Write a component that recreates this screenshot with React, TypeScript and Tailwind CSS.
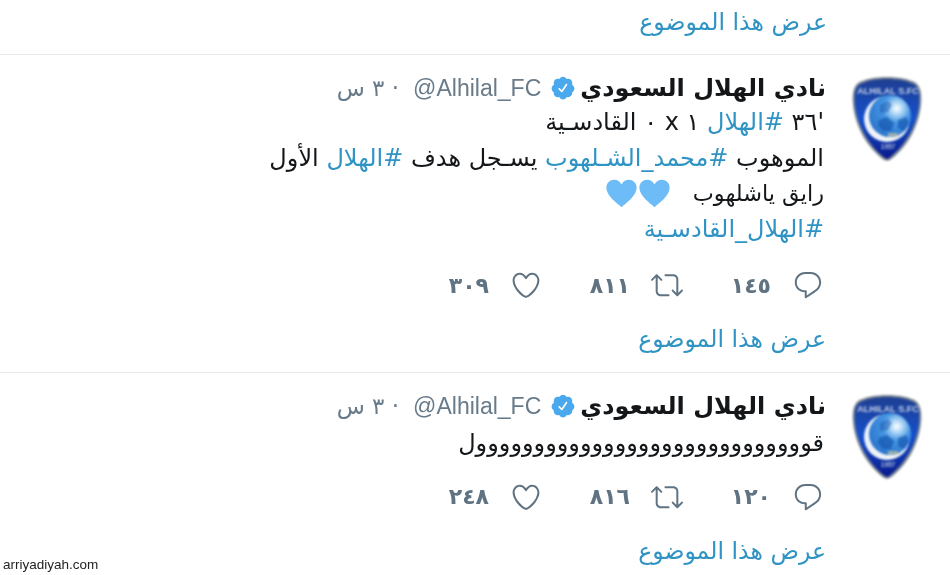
import React from 'react'

const replyPath =
    'M14.046 2.242l-4.148-.01h-.002c-4.374 0-7.8 3.427-7.8 7.802 0 4.098 3.186 7.206 7.465 7.37v3.828c0 .108.044.286.12.403.142.225.384.347.632.347.138 0 .277-.038.402-.118.264-.168 6.473-4.14 8.088-5.506 1.902-1.61 3.04-3.97 3.043-6.312v-.017c-.006-4.367-3.43-7.787-7.8-7.788zm3.787 12.972c-1.134.96-4.862 3.405-6.772 4.643V16.67c0-.414-.335-.75-.75-.75h-.396c-3.66 0-6.318-2.476-6.318-5.886 0-3.534 2.768-6.302 6.3-6.302l4.147.01h.002c3.532 0 6.3 2.766 6.302 6.296-.003 1.91-.942 3.844-2.514 5.176z'
const retweetPath =
    'M23.77 15.67c-.292-.293-.767-.293-1.06 0l-2.22 2.22V7.65c0-2.068-1.683-3.75-3.75-3.75h-5.85c-.414 0-.75.336-.75.75s.336.75.75.75h5.85c1.24 0 2.25 1.01 2.25 2.25v10.24l-2.22-2.22c-.293-.293-.768-.293-1.06 0s-.294.768 0 1.06l3.5 3.5c.145.147.337.22.53.22s.383-.072.53-.22l3.5-3.5c.294-.292.294-.767 0-1.06zm-10.66 3.28H7.26c-1.24 0-2.25-1.01-2.25-2.25V6.46l2.22 2.22c.148.147.34.22.532.22s.384-.073.53-.22c.293-.293.293-.768 0-1.06l-3.5-3.5c-.293-.294-.768-.294-1.06 0l-3.5 3.5c-.294.292-.294.767 0 1.06s.767.293 1.06 0l2.22-2.22V16.7c0 2.068 1.683 3.75 3.75 3.75h5.85c.414 0 .75-.336.75-.75s-.337-.75-.75-.75z'
const heartPath =
    'M12 21.638h-.014C9.403 21.59 1.95 14.856 1.95 8.478c0-3.064 2.525-5.754 5.403-5.754 2.29 0 3.83 1.58 4.646 2.73.814-1.148 2.354-2.73 4.645-2.73 2.88 0 5.404 2.69 5.404 5.755 0 6.376-7.454 13.11-10.037 13.157H12zM7.354 4.225c-2.08 0-3.903 1.988-3.903 4.255 0 5.74 7.034 11.596 8.55 11.658 1.518-.062 8.55-5.917 8.55-11.658 0-2.267-1.823-4.255-3.903-4.255-2.528 0-3.94 2.936-3.952 2.965-.23.562-1.156.562-1.387 0-.014-.03-1.425-2.965-3.954-2.965z'
const badgePath =
    'M22.5 12.5c0-1.58-.875-2.95-2.148-3.6.154-.435.238-.905.238-1.4 0-2.21-1.71-3.998-3.818-3.998-.47 0-.92.084-1.336.25C14.818 2.415 13.51 1.5 12 1.5s-2.816.917-3.437 2.25c-.415-.165-.866-.25-1.336-.25-2.11 0-3.818 1.79-3.818 4 0 .494.083.964.237 1.4-1.272.65-2.147 2.018-2.147 3.6 0 1.495.782 2.798 1.942 3.486-.02.17-.032.34-.032.514 0 2.21 1.708 4 3.818 4 .47 0 .92-.086 1.335-.25.62 1.334 1.926 2.25 3.437 2.25 1.512 0 2.818-.916 3.437-2.25.415.163.865.248 1.336.248 2.11 0 3.818-1.79 3.818-4 0-.174-.012-.344-.033-.513 1.158-.687 1.943-1.99 1.943-3.484zm-6.616-3.334l-4.334 6.5c-.145.217-.382.334-.625.334-.143 0-.288-.04-.416-.126l-.115-.094-2.415-2.415c-.293-.293-.293-.768 0-1.06s.768-.294 1.06 0l1.77 1.767 3.825-5.74c.23-.345.696-.436 1.04-.207.346.23.44.696.21 1.04z'

function Icon({ d, className }: { d: string; className?: string }) {
    return (
        <svg viewBox="0 0 24 24" className={className} fill="currentColor">
            <path d={d} />
        </svg>
    )
}

function Crest({ id }: { id: string }) {
    return (
        <svg viewBox="0 0 70 84" className="w-[70px] h-[84px] shrink-0 blur-[0.8px]">
            <defs>
                <linearGradient id={id + 's'} x1="0" y1="0" x2="0" y2="1">
                    <stop offset="0" stopColor="#1f3f92" />
                    <stop offset="0.5" stopColor="#1450cc" />
                    <stop offset="1" stopColor="#0a1a8c" />
                </linearGradient>
                <radialGradient id={id + 'b'} cx="0.66" cy="0.32" r="0.75">
                    <stop offset="0" stopColor="#ffffff" />
                    <stop offset="0.18" stopColor="#b4daf6" />
                    <stop offset="0.45" stopColor="#4494e2" />
                    <stop offset="1" stopColor="#2a74cc" />
                </radialGradient>
            </defs>
            <path
                d="M35 0 C46 0 58 2 64 6 C69 10 70 18 69 28 C67 48 56 70 38 83 C36 84 34 84 32 83 C14 70 3 48 1 28 C0 18 1 10 6 6 C12 2 24 0 35 0 Z"
                fill="#7d8794"
            />
            <path
                d="M35 2 C46 2 57 4 63 8 C67 11 68 18 67 28 C65 47 54 68 37 81 C36 82 34 82 33 81 C16 68 5 47 3 28 C2 18 3 11 7 8 C13 4 24 2 35 2 Z"
                fill={`url(#${id}s)`}
            />
            <text
                x="36"
                y="17"
                textAnchor="middle"
                fontSize="9"
                fontWeight="700"
                fill="#c4cee4"
                fontFamily="'Liberation Sans', sans-serif"
                direction="ltr"
            >
                ALHILAL S.FC
            </text>
            <circle cx="35" cy="42" r="23" fill="#eef3f8" />
            <circle cx="38" cy="39" r="21" fill={`url(#${id}b)`} />
            <path d="M27 43 l8 -3 l7 6 l-3 8 l-8 0 l-5 -6 Z" fill="#0f4fa8" opacity="0.6" />
            <path d="M46 43 l8 -3 l3 6 l-5 8 l-6 -3 Z" fill="#0f4fa8" opacity="0.6" />
            <path d="M28 28 l8 -4 l4 4 l-4 7 l-8 1 Z" fill="#0f4fa8" opacity="0.45" />
            <path d="M36 56 l9 0 l3 3 l-12 1 Z" fill="#a8b6a8" opacity="0.9" />
            <text
                x="36"
                y="72"
                textAnchor="middle"
                fontSize="6.5"
                fontWeight="700"
                fill="#aebcd8"
                fontFamily="'Liberation Sans', sans-serif"
                direction="ltr"
            >
                1957
            </text>
        </svg>
    )
}

function Heart() {
    return (
        <svg viewBox="0 0 24 24" className="w-[33px] h-[33px]" fill="#6dbcf7">
            <path d="M12 22 C9 19 1 14 1 7.8 C1 4.3 3.7 2 6.6 2 C9 2 11 3.4 12 5.4 C13 3.4 15 2 17.4 2 C20.3 2 23 4.3 23 7.8 C23 14 15 19 12 22 Z" />
        </svg>
    )
}

function Tag({ children }: { children: React.ReactNode }) {
    return <span className="text-[#2f93c4]">{children}</span>
}

function ThreadLink() {
    return <div className="h-8 leading-8 pr-[123px] text-[23.6px] text-[#2f93c4]">عرض هذا الموضوع</div>
}

function Action({ d, count }: { d: string; count: string }) {
    return (
        <div className="w-[141px] flex items-center pr-[2px] text-[#5f7382]">
            <Icon d={d} className="w-8 h-8" />
            <span className="font-bold text-[22px] mr-[21px]">{count}</span>
        </div>
    )
}

function Tweet({
    id,
    counts,
    children,
    actionsClass,
}: {
    id: string
    counts: string[]
    children: React.ReactNode
    actionsClass: string
}) {
    return (
        <div className="flex border-t border-[#e6eaed] pt-4 pr-[28px]">
            <div className="mt-[6px]">
                <Crest id={id} />
            </div>
            <div className="mr-[26px] flex-1 min-w-0">
                <div className="flex items-center h-[34px] whitespace-nowrap">
                    <span className="font-bold text-[24px] text-[#14171a]">نادي الهلال السعودي</span>
                    <Icon d={badgePath} className="w-[26px] h-[26px] mr-[4px] ml-[9px] text-[#4aa8ec]" />
                    <span className="text-[23px] text-[#687b8a] font-['Liberation_Sans',sans-serif]" dir="ltr">
                        @Alhilal_FC
                    </span>
                    <span className="text-[23px] text-[#687b8a] mr-[14px]">· ٣ س</span>
                </div>
                <div className="text-[24px] leading-[35.5px] text-[#14171a] whitespace-nowrap pr-[2px]">
                    {children}
                </div>
                <div className={'flex h-8 items-center ' + actionsClass}>
                    <Action d={replyPath} count={counts[0]} />
                    <Action d={retweetPath} count={counts[1]} />
                    <Action d={heartPath} count={counts[2]} />
                </div>
                <div className="mt-[22px] -mr-[123px]">
                    <ThreadLink />
                </div>
            </div>
        </div>
    )
}

export default function App() {
    return (
        <div
            dir="rtl"
            className="relative w-[950px] h-[575px] overflow-hidden bg-white blur-[0.3px] font-['DejaVu_Sans',sans-serif]"
        >
            <div className="pt-[6px] h-[54px]">
                <ThreadLink />
            </div>
            <Tweet id="a" counts={['١٤٥', '٨١١', '٣٠٩']} actionsClass="mt-[22px]">
                <div>'٣٦ <Tag>#الهلال</Tag> ١ x ٠ القادسـية</div>
                <div>
                    الموهوب <Tag>#محمد_الشـلهوب</Tag> يسـجل هدف <Tag>#الهلال</Tag> الأول
                </div>
                <div className="flex items-center h-[35.5px]">
                    <span className="text-[22.4px]">رايق ياشلهوب</span>
                    <span className="flex mr-[22px]">
                        <Heart />
                        <Heart />
                    </span>
                </div>
                <div>
                    <Tag>#الهلال_القادسـية</Tag>
                </div>
            </Tweet>
            <div className="h-[17px]" />
            <Tweet id="b" counts={['١٢٠', '٨١٦', '٢٤٨']} actionsClass="mt-[19px]">
                <div className="pt-[3px]">قووووووووووووووووووووووووووووول</div>
            </Tweet>
            <span
                dir="ltr"
                className="absolute left-[3px] bottom-[0px] text-[13.5px] text-[#222] font-['Liberation_Sans',sans-serif]"
            >
                arriyadiyah.com
            </span>
        </div>
    )
}
